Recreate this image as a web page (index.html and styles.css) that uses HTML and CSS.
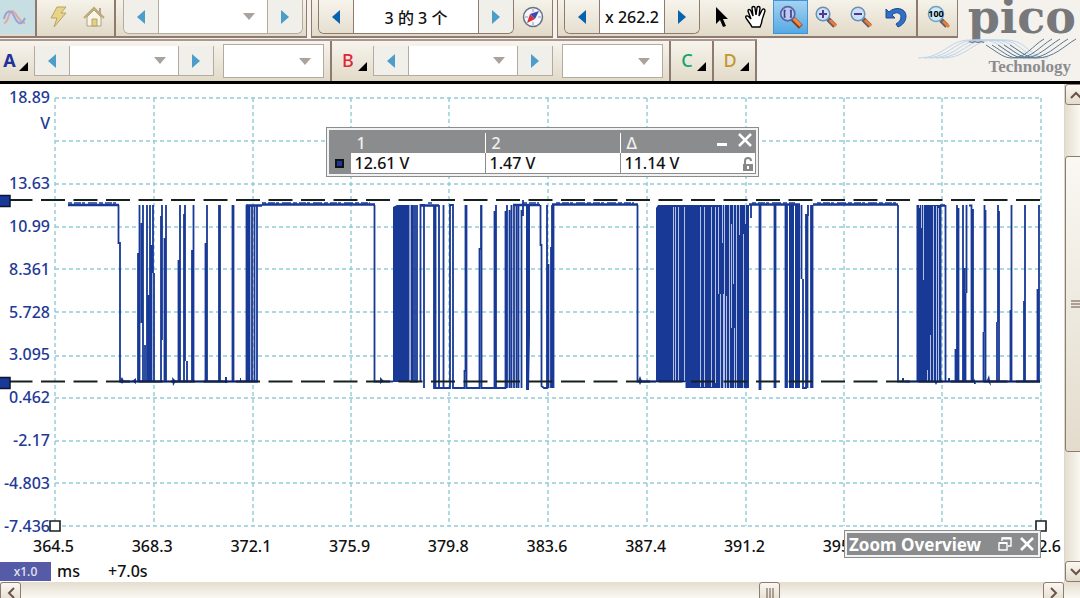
FILE: index.html
```html
<!DOCTYPE html>
<html lang="zh-CN">
<head>
    <meta charset="UTF-8">
    <meta name="viewport" content="width=device-width, initial-scale=1.0">
    <title>Pico Technology</title>
    <link rel="stylesheet" href="styles.css">
</head>
<body>
    <header class="header">
        <div class="logo">
            <div class="logo-name">pico</div>
            <svg class="logo-waves" width="164" height="22" viewBox="0 0 164 22">
                <g class="wave-light">
                    <path d="M2 20C28 20 32 2 54 2H66C88 2 88 20 112 20"/>
                    <path d="M8 20C34 20 38 2 60 2H72C94 2 94 20 118 20"/>
                    <path d="M14 20C40 20 44 2 66 2H78C100 2 100 20 124 20"/>
                    <path d="M20 20C46 20 50 2 72 2H84C106 2 106 20 128 20"/>
                    <path d="M26 20C52 20 56 2 78 2H90C112 2 112 20 132 20"/>
                </g>
                <g class="wave-dark">
                    <path d="M70 7C84 16 88 20 96 20C110 20 116 8 128 1"/>
                    <path d="M76 7C90 16 94 20 102 20C116 20 124 8 136 1"/>
                    <path d="M82 7C96 16 100 20 108 20C122 20 132 8 144 1"/>
                    <path d="M88 7C102 16 106 20 114 20C130 20 140 8 152 1"/>
                    <path d="M94 7C108 16 112 20 120 20C138 20 148 8 160 1"/>
                </g>
            </svg>
            <div class="logo-sub">Technology</div>
        </div>

        <div class="toolbar-row top-row">
            <div class="toolbar">
                <button class="tool wave-tool" aria-label="Scope">
                    <svg width="30" height="24" viewBox="0 0 30 24"><path class="wave-red" d="M4 18C9 18 8 6 12 6S19 18 25 18"/><path class="wave-blue" d="M4 14C6 5 11 4 14 11S21 22 25 13"/></svg>
                </button>
                <span class="sep"></span>
                <button class="tool spaced" aria-label="Trigger">
                    <svg width="24" height="24" viewBox="0 0 24 24"><path d="M10 2h9l-5 6h5L7 22l3-9H4z" fill="#e8d489" stroke="#b8a463"/></svg>
                </button>
                <button class="tool" aria-label="Home">
                    <svg width="24" height="24" viewBox="0 0 24 24"><path d="M17 3h2v7h-2z" fill="#c99"/><path d="M5 12v9h14v-9l-7-7z" fill="#f8f5e8" stroke="#aca27e"/><path d="M2 13L12 3l10 10" fill="none" stroke="#b9aa78" stroke-width="2"/><path d="M10 14h5v7h-5z" fill="#e5cf83" stroke="#b6a468"/></svg>
                </button>
                <span class="sep"></span>
                <div class="stepper faded">
                    <button class="step" aria-label="Previous timebase"><i class="left"></i></button>
                    <select class="field timebase" aria-label="Timebase"><option></option></select>
                    <button class="step" aria-label="Next timebase"><i class="right"></i></button>
                </div>
            </div>
            <div class="toolbar">
                <div class="stepper">
                    <button class="step" aria-label="Previous buffer"><i class="left"></i></button>
                    <input class="field buffer" type="text" value="3 的 3 个" aria-label="Buffer">
                    <button class="step faded" aria-label="Next buffer"><i class="right"></i></button>
                </div>
                <button class="tool compass" aria-label="Buffer navigator">
                    <svg width="22" height="22" viewBox="0 0 22 22"><circle cx="11" cy="11" r="9.500" fill="#f6f7fb" stroke="#66718b" stroke-width="1.500"/><path d="M11 3v3M11 16v3M3 11h3M16 11h3" stroke="#8f98ad"/><path d="M5 17L8 8l5 5z" fill="#d92f3a"/><path d="M17 5L8 8l5 5z" fill="#3a49b5"/></svg>
                </button>
            </div>
            <div class="toolbar">
                <div class="stepper">
                    <button class="step" aria-label="Zoom less"><i class="left"></i></button>
                    <input class="field zoom-value" type="text" value="x 262.2" aria-label="Zoom factor">
                    <button class="step" aria-label="Zoom more"><i class="right"></i></button>
                </div>
                <div class="tools">
                    <button class="tool" aria-label="Normal selection">
                        <svg width="24" height="24" viewBox="0 0 24 24"><path d="M7 2v17l4-4 3 7 3-1-3-7h5z" fill="#000"/></svg>
                    </button>
                    <button class="tool" aria-label="Hand tool">
                        <svg width="24" height="24" viewBox="0 0 24 24"><path d="M8 22C6 18 3 15 2 13c-1-2 1-3 3-1l2 2L4 6c0-2 2-2 3 0l2 5L8 3c0-2 3-2 3 0l1 7 1-7c0-2 3-2 3 0l-1 8 3-6c1-2 3-1 3 1l-3 9c0 3-1 5-2 7z" fill="#fff" stroke="#000" stroke-width="1.400"/></svg>
                    </button>
                    <button class="tool active" aria-label="Marquee zoom">
                        <svg width="26" height="26" viewBox="0 0 24 24"><path d="M13 13l8 8" stroke="#7d3d20" stroke-width="5"/><path d="M14 13l7 7" stroke="#f08a3c" stroke-width="3"/><circle cx="9" cy="9" r="6.500" fill="#b8cdf1" stroke="#5865a8" stroke-width="1.600"/><path d="M7 6H6v6h1M11 6h1v6h-1" fill="none" stroke="#443a86" stroke-width="1.500"/></svg>
                    </button>
                    <button class="tool" aria-label="Zoom in">
                        <svg width="24" height="24" viewBox="0 0 24 24"><path d="M14 14l7 7" stroke="#5c5f70" stroke-width="5"/><path d="M16 15l6 6" stroke="#ee7b31" stroke-width="3"/><circle cx="9" cy="9" r="6.800" fill="#cbe1f7" stroke="#6d8fb3" stroke-width="1.500"/><path d="M5 9h8M9 5v8" stroke="#503a91" stroke-width="2"/></svg>
                    </button>
                    <button class="tool" aria-label="Zoom out">
                        <svg width="24" height="24" viewBox="0 0 24 24"><path d="M14 14l7 7" stroke="#5c5f70" stroke-width="5"/><path d="M16 15l6 6" stroke="#ee7b31" stroke-width="3"/><circle cx="9" cy="9" r="6.800" fill="#cbe1f7" stroke="#6d8fb3" stroke-width="1.500"/><path d="M5 9h8" stroke="#503a91" stroke-width="2"/></svg>
                    </button>
                    <button class="tool" aria-label="Undo zoom">
                        <svg width="24" height="24" viewBox="0 0 24 24"><path d="M2 4v9h9L8 10c4-4 9-2 9 2 0 3-2 5-5 7l2 3c5-2 8-6 8-11 0-8-11-10-17-4z" fill="#2f6fc6" stroke="#1d4a93"/></svg>
                    </button>
                </div>
                <span class="sep"></span>
                <button class="tool last" aria-label="Zoom 100%">
                    <svg width="26" height="24" viewBox="0 0 26 24"><path d="M16 15l6 6" stroke="#5c5f70" stroke-width="5"/><path d="M18 16l6 6" stroke="#ee7b31" stroke-width="3"/><circle cx="11" cy="9" r="7.500" fill="#cbe9f7" stroke="#6d9fc0" stroke-width="1.500"/><text x="11" y="12" text-anchor="middle" class="icon-text">100</text></svg>
                </button>
            </div>
        </div>

        <div class="toolbar-row channel-row">
            <div class="channel">
                <button class="channel-name channel-a">A</button>
                <div class="stepper faded flat">
                    <button class="step" aria-label="Channel A range down"><i class="left"></i></button>
                    <select class="field range" aria-label="Channel A range"><option></option></select>
                    <button class="step" aria-label="Channel A range up"><i class="right"></i></button>
                </div>
                <select class="field coupling" aria-label="Channel A coupling"><option></option></select>
            </div>
            <div class="channel">
                <button class="channel-name channel-b">B</button>
                <div class="stepper faded flat">
                    <button class="step" aria-label="Channel B range down"><i class="left"></i></button>
                    <select class="field range" aria-label="Channel B range"><option></option></select>
                    <button class="step" aria-label="Channel B range up"><i class="right"></i></button>
                </div>
                <select class="field coupling" aria-label="Channel B coupling"><option></option></select>
            </div>
            <div class="channel"><button class="channel-name channel-c">C</button></div>
            <div class="channel"><button class="channel-name channel-d">D</button></div>
        </div>
    </header>

    <main class="scope">
        <section class="plot">
            <svg class="graph" viewBox="0 0 1064 498" preserveAspectRatio="none">
                <!-- grid -->
                <path class="grid" d="M55 14H1041M55 57H1041M55 100H1041M55 143H1041M55 185H1041M55 228H1041M55 272H1041M55 314H1041M55 357H1041M55 399H1041M55 442H1041"/>
                <path class="grid" d="M55 14V442M154 14V442M253 14V442M351 14V442M449 14V442M548 14V442M647 14V442M746 14V442M844 14V442M942 14V442M1041 14V442"/>

                <!-- noise on the high level -->
                <path class="high" d="M68 121H119M246 121.500H262M262 120.500H375M420 121.500H439M513 121H540M552 120.500H638M749 120.500H800M813 120.500H898M940 121.500H945"/>
                <path class="noise" d="M68 119H119M262 119H370M428 119H434M523 119H539M556 119H634M752 119H795M817 119H896"/>

                <!-- burst 1 -->
                <path class="trace" d="M118.500 121V159H120V297.500H258"/>
                <path class="trace" d="M138 169V297M139.500 121V297M141.500 139V239M143 121V297M145 261V297M147 121V297M148.500 211V297M150 121V297M151.500 161V297M153 121V189M154 189V297M161 132V297M162 121V256M164.500 154V297M166 121V297M178.500 176V297M180 121V297M184 130V297M185 121V277M187 277V297M192 166V297M193.500 121V297M205.500 159V297M207 121V297M219 121V297M220 121V297M232.500 121V297M233.500 121V297M246.500 121V297M248 121V297M249.500 121V297M252 121V297M254.500 121V297M257 121V297"/>

                <!-- burst 2 -->
                <path class="trace" d="M374.500 121V297.500H393"/>
                <path class="solid" d="M393 123L397 121H409.500V298H393ZM526 120H530V250L529 306H526Z"/>
                <path class="trace" d="M411.500 121V297M413 121V297M415 121V297M417 121V297.500H410M420.500 297V121H424V304M434 121V304H439V121M435.500 121V304M439 304H450V121H453V304H464.500V287H465.500V121M466.500 121V304H479.500V165H481V121M481.500 121V304H494.500V128H496V121V304H505.500V128H507V121V304M509.500 126V304M511.500 121V304M514 121V304M516.500 121V304M518.500 121V304M521.500 126V304M443.500 121V304M523 116V132M540.500 121V161H541.500V302L544 304H547V121M548.500 180V304M551 163V304M552 121V304M553.500 121V304"/>

                <!-- burst 3 -->
                <path class="trace" d="M637.500 121V297.500H656"/>
                <path class="solid" d="M656 124L658 121H749V304H685.500V298H656ZM789 121H794V304H789ZM795 121H800V304H795Z"/>
                <path class="gap" d="M673.500 123V297M675.500 123V297M678.500 123V297M684.500 123V297M700.500 123V303M704.500 123V303M711.500 123V303M715.500 123V299M718.500 123V210M720.500 210V304M723.500 210V304M726.500 212V304M722.500 121V159M724.500 121V304M729.500 121V304M731.500 140V244M733.500 121V200M734.500 244V304M736.500 121V304M739.500 121V151M743.500 150V304M745.500 121V140"/>
                <path class="trace" d="M751 134V121M759.500 121V306M760.500 121V306M774.500 121V304M775.500 121V304M785.500 121V304M787 121V304M801.500 121V195M803 195V304H806V131H808V121M807.500 131V304M811 121V304M812.500 121V235M812.500 235V304"/>

                <!-- burst 4 -->
                <path class="trace" d="M898 121V297.500H1040"/>
                <path class="solid" d="M916.500 121H941.500V298H916.500Z"/>
                <path class="gap" d="M919.500 121V124M921.500 121V144M923.500 121V196M927.500 286V297M930.500 251V297M933.500 122V297M936.500 122V297M938.500 124V297"/>
                <path class="trace" d="M945.500 121V297M955.500 265V297M957 121V297M958.500 124V297M963 121V297M964.500 184V297M965.500 209V297M966.500 121V209M969 121.500H971.500V297M973 125V297M983.500 248V297M984.500 121V248M985.500 126V297M997 238V297M998 121V238M999 127V297M1010.500 226V297M1011.500 121V297M1024 217V297M1025 121V297M1037.500 205V297M1039 121V297"/>
                <path class="blob" d="M120 296l2-3 2 4-2 3zM132 297l4-3v6zM172 293l4 4-3 5zM225 293h2v6h-2zM240 294h1v4h-1zM380 293l4 4-4 3zM638 297l2-5 2 5-2 4zM902 294h2v4h-2zM934 297h4l-2 4zM948 294h2v4h-2zM974 294l2 6h-2zM987 296l2-5 2 11-2-3z"/>

                <!-- rulers -->
                <path class="ruler" d="M8.500 116H1041M8.500 297.500H1041"/>
                <path class="ruler-low" d="M120 297.500H258M640 297.500H685M905 297.500H1040"/>
                <path class="ruler-handle" d="M-1 111.500H10V122.500H-1ZM-1 293.500H10V304.500H-1Z"/>
                <path class="zero-handle" d="M50 437H60V447H50ZM1036 437H1046V447H1036Z"/>
            </svg>

            <ul class="y-axis">
                <li>18.89<br>V</li>
                <li></li>
                <li>13.63</li>
                <li>10.99</li>
                <li>8.361</li>
                <li>5.728</li>
                <li>3.095</li>
                <li>0.462</li>
                <li>-2.17</li>
                <li>-4.803</li>
                <li>-7.436</li>
            </ul>
            <ul class="x-axis">
                <li>364.5</li>
                <li>368.3</li>
                <li>372.1</li>
                <li>375.9</li>
                <li>379.8</li>
                <li>383.6</li>
                <li>387.4</li>
                <li>391.2</li>
                <li>395.0</li>
                <li></li>
                <li>402.6</li>
            </ul>
            <div class="status">
                <span class="scale">x1.0</span>
                <span class="unit">ms</span>
                <span>+7.0s</span>
            </div>

            <div class="legend">
                <table>
                    <thead>
                        <tr>
                            <th class="marker"></th>
                            <th>1</th>
                            <th>2</th>
                            <th>Δ</th>
                        </tr>
                    </thead>
                    <tbody>
                        <tr>
                            <th class="marker"><span class="swatch"></span></th>
                            <td>12.61 V</td>
                            <td>1.47 V</td>
                            <td>11.14 V</td>
                        </tr>
                    </tbody>
                </table>
                <div class="legend-buttons">
                    <button aria-label="Minimise"><svg width="14" height="14" viewBox="0 0 14 14"><path d="M2 10h10v3H2z" fill="#fff"/></svg></button>
                    <button aria-label="Close"><svg width="14" height="14" viewBox="0 0 14 14"><path d="M1 1l12 12M13 1L1 13" stroke="#fff" stroke-width="2.500"/></svg></button>
                </div>
                <svg class="lock" width="12" height="15" viewBox="0 0 12 15"><path d="M3 7V4c0-4 6-4 6 0" fill="none" stroke="#888" stroke-width="2"/><path d="M1 7h10v7H1z" fill="#888"/><path d="M5 9h2v3H5z" fill="#fff"/></svg>
            </div>

            <div class="overview">
                <span class="overview-title">Zoom Overview</span>
                <button aria-label="Restore"><svg width="14" height="14" viewBox="0 0 14 14"><path d="M1 6h8v7H1zM4 4V1h9v8h-3" fill="none" stroke="#fff" stroke-width="1.400"/><path d="M1 6h8M4 1.500h9" stroke="#fff" stroke-width="2"/></svg></button>
                <button aria-label="Close overview"><svg width="14" height="14" viewBox="0 0 14 14"><path d="M1 1l12 12M13 1L1 13" stroke="#fff" stroke-width="2.500"/></svg></button>
            </div>
        </section>

        <div class="scroll-v">
            <button class="scroll-btn" aria-label="Scroll up"><svg width="12" height="8" viewBox="0 0 12 8"><path d="M1 7l5-5 5 5"/></svg></button>
            <span class="before"></span>
            <button class="scroll-btn thumb" aria-label="Vertical position"><svg width="10" height="8" viewBox="0 0 10 8"><path d="M0 1h10M0 4h10M0 7h10"/></svg></button>
            <span class="after"></span>
            <button class="scroll-btn" aria-label="Scroll down"><svg width="12" height="8" viewBox="0 0 12 8"><path d="M1 1l5 5 5-5"/></svg></button>
        </div>
    </main>

    <footer class="scroll-h">
        <button class="scroll-btn" aria-label="Scroll left"><svg width="8" height="12" viewBox="0 0 8 12"><path d="M7 1L2 6l5 5"/></svg></button>
        <span class="before"></span>
        <button class="scroll-btn thumb" aria-label="Horizontal position"><svg width="8" height="10" viewBox="0 0 8 10"><path d="M1 0v10M4 0v10M7 0v10"/></svg></button>
        <span class="after"></span>
        <button class="scroll-btn" aria-label="Scroll right"><svg width="8" height="12" viewBox="0 0 8 12"><path d="M1 1l5 5-5 5"/></svg></button>
    </footer>
</body>
</html>
```

FILE: styles.css
```css
* {
    box-sizing: border-box;
}

body {
    margin: 0;
    min-height: 100vh;
    display: flex;
    flex-direction: column;
    overflow: hidden;
    background-color: #fff;
    color: #111;
    font-family: "Noto Sans", "Open Sans", "Noto Sans CJK SC", sans-serif;
    font-size: 16px;
}

button,
input,
select {
    margin: 0;
    padding: 0;
    border: none;
    border-radius: 0;
    font-family: inherit;
    font-size: inherit;
    color: inherit;
}

button {
    display: flex;
    align-items: center;
    justify-content: center;
    background: none;
    cursor: pointer;
}

ul {
    margin: 0;
    padding: 0;
    list-style: none;
}

/* Header */
.header {
    position: relative;
    background-color: #f5f2ee;
    border-bottom: 3px solid #000;
    overflow: hidden;
}

.logo {
    position: absolute;
    top: 0;
    right: 0;
    width: 164px;
    height: 80px;
}

.logo-name {
    position: absolute;
    right: 4px;
    top: -6px;
    color: #76787b;
    font-family: "DejaVu Serif", serif;
    font-weight: bold;
    font-size: 46px;
    line-height: 46px;
}

.logo-waves {
    position: absolute;
    left: 0;
    top: 38px;
    fill: none;
}

.wave-light {
    stroke: #bcd4e8;
}

.wave-dark {
    stroke: #5b7790;
}

.logo-sub {
    position: absolute;
    right: 9px;
    top: 57px;
    color: #8a8c8e;
    font-family: "Liberation Serif", serif;
    font-weight: bold;
    font-size: 17px;
    line-height: 20px;
}

/* Toolbars */
.toolbar-row {
    position: relative;
    display: flex;
}

.top-row {
    height: 38px;
    gap: 4px;
}

.toolbar {
    display: flex;
    align-items: flex-start;
    padding: 0 3px 0 6px;
    background-image: linear-gradient(#f5f2e9, #e2dac8);
    border-right: 1px solid #8f7a70;
    border-bottom: 2px solid #8f7a70;
    border-left: 1px solid #8f7a70;
}

.toolbar:first-child {
    padding-left: 0;
    border-left: none;
}

.toolbar:last-child {
    padding-right: 0;
}

.sep {
    width: 2px;
    height: 36px;
    background-color: #8f7a70;
}

.tool {
    width: 35px;
    height: 34px;
}

.wave-tool {
    background-color: #c7dfe2;
    justify-content: flex-start;
}

.wave-red,
.wave-blue {
    fill: none;
    stroke-width: 2;
}

.wave-red {
    stroke: #e3a5a0;
}

.wave-blue {
    stroke: #96a4d8;
}

.spaced {
    margin-left: 4px;
}

.spaced + .tool {
    margin-right: 3px;
}

.compass {
    margin: 0 -1px 0 1px;
}

.tools {
    display: flex;
    margin-left: 3px;
    padding-right: 3px;
}

.last {
    width: 39px;
}

.active {
    background-image: linear-gradient(#a5d2f1, #55a9e4);
    border: 1px solid #3f94d5;
}

.icon-text {
    font-size: 9px;
    font-weight: bold;
}

.stepper {
    display: flex;
    height: 34px;
    border: 1px solid #8f7a70;
    border-top: none;
    border-radius: 0 0 6px 6px;
    overflow: hidden;
}

.sep + .stepper {
    margin-left: 7px;
}

.step {
    width: 34px;
    background-image: linear-gradient(#f7f4ed, #e6dfd0);
}

.field {
    background-color: #fff;
    border-right: 1px solid #8f7a70;
    border-left: 1px solid #8f7a70;
    font-weight: 500;
    text-align: center;
}

select.field {
    appearance: none;
    background-image: url("data:image/svg+xml,%3Csvg xmlns='http://www.w3.org/2000/svg' width='12' height='7'%3E%3Cpath d='M0 0h12L6 7z' fill='%23aaa29c'/%3E%3C/svg%3E");
    background-repeat: no-repeat;
    background-position: right 12px center;
}

.timebase {
    width: 110px;
}

.buffer {
    width: 126px;
}

.zoom-value {
    width: 66px;
}

.left,
.right {
    border-top: 7px solid transparent;
    border-bottom: 7px solid transparent;
}

.left {
    border-right: 8px solid #0763ae;
}

.right {
    border-left: 8px solid #0763ae;
}

.faded .left,
.faded .right {
    border-right-color: #4d9dcb;
    border-left-color: #4d9dcb;
}

.faded,
.faded .field {
    border-color: #b5aaa2;
}

.faded.step,
.faded .step {
    background: #f1efea;
}

/* Channels */
.channel-row {
    width: 757px;
    height: 42px;
    margin-top: 1px;
    background-image: linear-gradient(#f7f4ed, #e2dac8);
    border-top: 2px solid #a89890;
    border-right: 2px solid #8f7a70;
}

.channel {
    display: flex;
    align-items: center;
    border-left: 2px solid #8f7a70;
}

.channel:first-child {
    border-left: none;
}

.channel-name {
    position: relative;
    width: 41px;
    height: 36px;
    padding-right: 9px;
    padding-bottom: 2px;
    font-size: 18px;
    font-weight: 500;
}

.channel-a {
    width: 34px;
    padding-right: 15px;
    color: #22319a;
    font-weight: bold;
}

.channel-b {
    color: #e22438;
}

.channel-c {
    color: #14a36b;
}

.channel-d {
    color: #c2982e;
}

.channel-name::after {
    content: "";
    position: absolute;
    right: 6px;
    bottom: 8px;
    border-bottom: 9px solid #000;
    border-left: 9px solid transparent;
}

.flat {
    height: 30px;
    border-radius: 0;
}

.range {
    width: 110px;
}

.coupling {
    width: 101px;
    height: 34px;
    margin: 0 6px 0 9px;
    border: 1px solid #b5aaa2;
}

/* Scope view */
.scope {
    flex: 1;
    display: flex;
}

.plot {
    position: relative;
    flex: 1;
    display: flex;
    flex-direction: column;
}

.graph {
    position: absolute;
    top: 0;
    left: 0;
    width: 100%;
    height: 100%;
    fill: none;
}

.grid {
    stroke: #93cbd8;
    stroke-width: 1.4;
    stroke-dasharray: 4 3;
}

.trace {
    stroke: #183a96;
    stroke-width: 1.8;
}

.high {
    stroke: #183a96;
    stroke-width: 2.5;
}

.noise {
    stroke: #183a96;
    stroke-width: 1.5;
    stroke-dasharray: 4 2 7 1 3 3 9 2;
}

.solid,
.blob {
    fill: #183a96;
}

.gap {
    stroke: #b4c0e2;
    stroke-width: 1;
}

.ruler {
    stroke: #16211f;
    stroke-width: 2;
    stroke-dasharray: 24 8.5;
}

.ruler-low {
    stroke: #10205a;
    stroke-width: 1.5;
}

.ruler-handle {
    fill: #183a96;
    stroke: #0a1433;
    stroke-width: 1.5;
}

.zero-handle {
    fill: #fff;
    stroke: #16211f;
    stroke-width: 1.6;
}

.y-axis {
    position: relative;
    flex: 1;
    display: flex;
    flex-direction: column;
    width: 50px;
    color: #1e3a96;
    font-weight: 500;
    line-height: 26px;
    text-align: right;
    white-space: nowrap;
}

.y-axis li {
    flex: 1 1 0;
    display: block;
    height: 0;
    min-height: 0;
}

.y-axis li:last-child {
    flex: none;
    height: 29px;
    margin-left: -4px;
}

.x-axis {
    position: relative;
    display: flex;
    height: 20px;
    margin: -6px 3px 0 33px;
    font-weight: 500;
    line-height: 20px;
}

.x-axis li {
    flex: 1;
}

.x-axis li:last-child {
    flex: none;
    width: 41px;
}

.status {
    position: relative;
    display: flex;
    height: 26px;
    padding-top: 6px;
    font-weight: 500;
    line-height: 18px;
}

.scale {
    width: 51px;
    height: 19px;
    margin-right: 6px;
    background-color: #555ba6;
    color: #e6e8f6;
    font-size: 12px;
    line-height: 20px;
    text-align: center;
}

.unit {
    width: 51px;
}

/* Floating panels */
.legend,
.overview {
    position: absolute;
    background-color: #8b8c8e;
    border: 1px solid #8b8c8e;
    box-shadow: inset 0 0 0 2px #f2f2f2;
}

.legend {
    top: 43px;
    left: 326px;
    width: 433px;
    padding: 5px 3px 3px;
}

.legend table {
    width: 100%;
    border-collapse: collapse;
    table-layout: fixed;
}

.legend th,
.legend td {
    height: 20px;
    padding: 0 0 0 4px;
    border-left: 1px solid #8b8c8e;
    font-weight: 500;
    line-height: 20px;
    text-align: left;
}

.legend th {
    padding-left: 6px;
    border-left-color: #fff;
    color: #f0f0f0;
}

.legend td {
    background-color: #fff;
}

.legend .marker {
    width: 20px;
    padding: 0 0 0 5px;
    border-left: none;
}

.legend .marker + th,
.legend .marker + td {
    width: 135px;
    border-left-color: #8b8c8e;
}

.swatch {
    display: block;
    width: 9px;
    height: 9px;
    background-color: #183a96;
    border: 2px solid #111;
}

.legend-buttons {
    position: absolute;
    top: 5px;
    right: 6px;
    display: flex;
    gap: 9px;
}

.lock {
    position: absolute;
    right: 4px;
    bottom: 4px;
}

.overview {
    right: 23px;
    bottom: 24px;
    display: flex;
    align-items: center;
    gap: 8px;
    width: 197px;
    height: 28px;
    padding: 0 6px 0 4px;
}

.overview-title {
    flex: 1;
    color: #fff;
    font-size: 17px;
    font-weight: bold;
    white-space: nowrap;
}

/* Scroll bars */
.scroll-v {
    display: flex;
    flex-direction: column;
    width: 16px;
    background-image: linear-gradient(to right, #e4ddcf, #faf8f2);
    border-left: 1px solid #ddd6ca;
    overflow: hidden;
}

.scroll-h {
    display: flex;
    height: 16px;
    padding-right: 16px;
    background-image: linear-gradient(#e4ddcf, #faf8f2);
    overflow: hidden;
}

.scroll-btn {
    flex: none;
    width: 21px;
    height: 21px;
    background-image: linear-gradient(#faf8f3, #e3dccd);
    border: 1px solid #8f7a70;
    border-radius: 3px;
}

.scroll-btn svg {
    fill: none;
    stroke: #6b5348;
    stroke-width: 2;
}

.thumb svg {
    stroke-width: 1;
}

.scroll-v .before {
    flex: 51;
}

.scroll-v .thumb {
    flex: 295;
}

.scroll-v .after {
    flex: 109;
}

.scroll-h .before {
    flex: 739;
}

.scroll-h .after {
    flex: 263;
}
```
